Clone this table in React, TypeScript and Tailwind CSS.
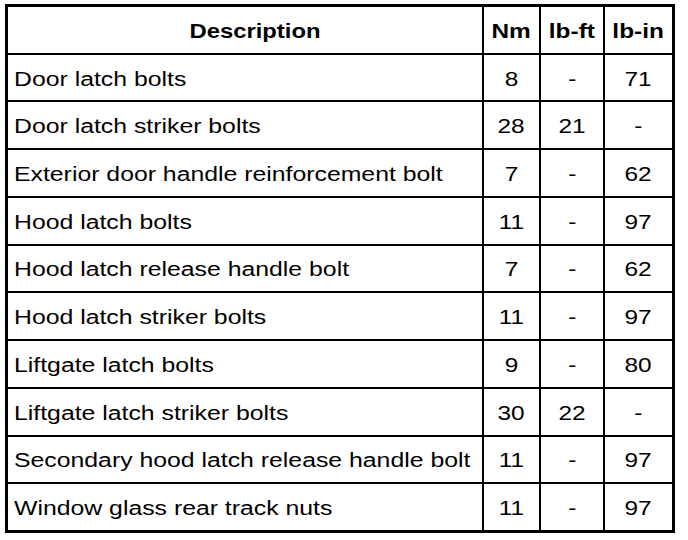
import React from 'react';

type Row = [string, string, string, string];

const rows: Row[] = [
  ['Door latch bolts', '8', '-', '71'],
  ['Door latch striker bolts', '28', '21', '-'],
  ['Exterior door handle reinforcement bolt', '7', '-', '62'],
  ['Hood latch bolts', '11', '-', '97'],
  ['Hood latch release handle bolt', '7', '-', '62'],
  ['Hood latch striker bolts', '11', '-', '97'],
  ['Liftgate latch bolts', '9', '-', '80'],
  ['Liftgate latch striker bolts', '30', '22', '-'],
  ['Secondary hood latch release handle bolt', '11', '-', '97'],
  ['Window glass rear track nuts', '11', '-', '97'],
];

const Num: React.FC<{ children: React.ReactNode; bold?: boolean }> = ({ children, bold }) => (
  <div className="bg-white flex items-center justify-center pt-[2px]">
    <span className={`inline-block origin-center scale-x-[1.22] ${bold ? 'font-bold' : ''}`}>{children}</span>
  </div>
);

const App: React.FC = () => {
  return (
    <div className="w-[688px] h-[540px] bg-white pt-[4px] pl-[5px] font-['Liberation_Sans',Arial,sans-serif] text-[20px] leading-none text-black">
      <div className="w-[670px] h-[529px] border-[3px] border-black bg-black grid grid-cols-[474px_55px_62px_67px] grid-rows-[repeat(11,minmax(0,1fr))] gap-[2px]">
        <div className="bg-white flex items-center justify-center pl-5 pt-[2px]">
          <span className="inline-block origin-center scale-x-[1.19] font-bold">Description</span>
        </div>
        <Num bold>Nm</Num>
        <Num bold>lb-ft</Num>
        <Num bold>lb-in</Num>
        {rows.map(([desc, nm, lbft, lbin]) => (
          <React.Fragment key={desc}>
            <div className="bg-white flex items-center pl-[6px] pt-[2px]">
              <span className="inline-block origin-left scale-x-[1.24]">{desc}</span>
            </div>
            <Num>{nm}</Num>
            <Num>{lbft}</Num>
            <Num>{lbin}</Num>
          </React.Fragment>
        ))}
      </div>
    </div>
  );
};

export default App;
